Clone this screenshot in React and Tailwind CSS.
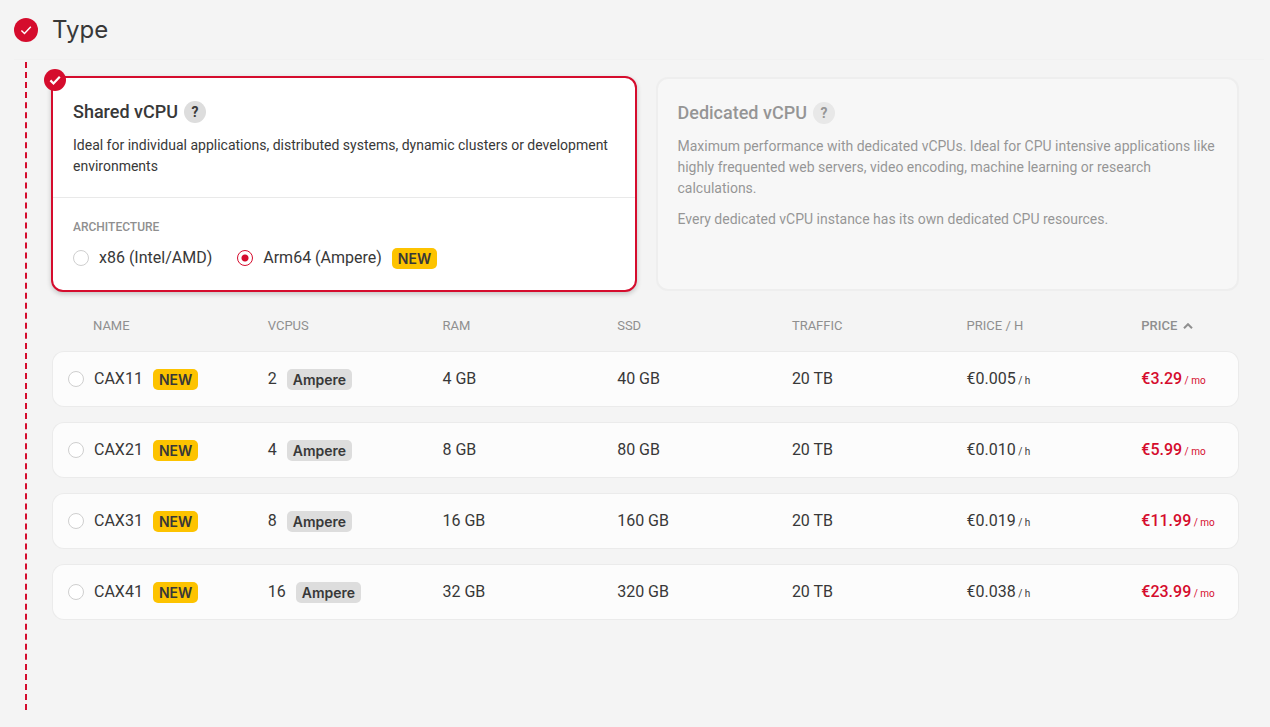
import { useState } from 'react';

const COLUMNS = ['Name', 'vCPUs', 'RAM', 'SSD', 'Traffic', 'Price / h'];

const SERVERS = [
    { name: 'CAX11', cpus: 2, ram: '4 GB', ssd: '40 GB', traffic: '20 TB', hourly: '€0.005', monthly: '€3.29' },
    { name: 'CAX21', cpus: 4, ram: '8 GB', ssd: '80 GB', traffic: '20 TB', hourly: '€0.010', monthly: '€5.99' },
    { name: 'CAX31', cpus: 8, ram: '16 GB', ssd: '160 GB', traffic: '20 TB', hourly: '€0.019', monthly: '€11.99' },
    { name: 'CAX41', cpus: 16, ram: '32 GB', ssd: '320 GB', traffic: '20 TB', hourly: '€0.038', monthly: '€23.99' },
];

const ARCHITECTURES = [
    { id: 'x86', label: 'x86 (Intel/AMD)' },
    { id: 'arm64', label: 'Arm64 (Ampere)', isNew: true },
];

const Check = ({ strokeWidth }) => (
    <svg viewBox="0 0 12 12" className="size-3" fill="none" stroke="currentColor" strokeWidth={strokeWidth} aria-hidden="true">
        <path d="M1.4 6.4 L4.5 9.5 L10.8 2.8" />
    </svg>
);

const Badge = ({ children, className }) => (
    <span className={`inline-block h-[21px] rounded-[5px] px-1.5 font-['Inter',sans-serif] text-sm leading-[21px] font-semibold text-[#383838] ${className}`}>
        {children}
    </span>
);

const Radio = (props) => (
    <input
        type="radio"
        className="m-0 block size-4 shrink-0 appearance-none rounded-full border border-[#cfcfcf] bg-white checked:border-[#d50c2d] checked:bg-[radial-gradient(circle,#d50c2d_3px,#fff_4px)]"
        {...props}
    />
);

const Help = ({ label }) => (
    <button type="button" aria-label={label} className="size-[22px] rounded-full bg-[#dddddd] text-center text-sm leading-[22px] font-bold text-[#383838]">
        ?
    </button>
);

const SharedCard = ({ arch, setArch }) => (
    <section className="relative -m-px rounded-xl border-2 border-[#d50c2d] bg-white shadow-[0_2px_5px_rgba(0,0,0,0.2)]">
        <span className="absolute -top-[9px] -left-[9px] flex size-[22px] items-center justify-center rounded-full bg-[#d50c2d] text-white">
            <Check strokeWidth={2.2} />
        </span>
        <div className="px-5 pt-[23px] pb-5">
            <div className="flex items-center gap-1.5">
                <h2 className="text-lg leading-[22px] font-medium">Shared vCPU</h2>
                <Help label="About shared vCPU" />
            </div>
            <p className="mt-3 text-sm leading-[21px]">
                Ideal for individual applications, distributed systems, dynamic clusters or development environments
            </p>
        </div>
        <div role="radiogroup" aria-labelledby="arch-title" className="border-t border-[#e9e9e9] px-5 pt-[21px] pb-5">
            <h3 id="arch-title" className="text-xs leading-4 font-medium text-[#8f8f8f] uppercase">Architecture</h3>
            <div className="mt-[11px] flex gap-[25px]">
                {ARCHITECTURES.map((item) => (
                    <label key={item.id} className="flex h-6 items-center gap-2.5 text-base">
                        <Radio name="arch" checked={arch === item.id} onChange={() => setArch(item.id)} />
                        {item.label}
                        {item.isNew && <Badge className="bg-[#fdc300]">NEW</Badge>}
                    </label>
                ))}
            </div>
        </div>
    </section>
);

const DedicatedCard = () => (
    <section className="rounded-xl border-2 border-[#e9e9e9] bg-[#fbfbfb] px-5 pt-[23px] pb-5 opacity-50">
        <div className="flex items-center gap-1.5">
            <h2 className="text-lg leading-[22px] font-medium">Dedicated vCPU</h2>
            <Help label="About dedicated vCPU" />
        </div>
        <p className="mt-3 text-sm leading-[21px]">
            Maximum performance with dedicated vCPUs. Ideal for CPU intensive applications like highly frequented web servers, video encoding, machine learning or research calculations.
        </p>
        <p className="mt-2.5 text-sm leading-[21px]">
            Every dedicated vCPU instance has its own dedicated CPU resources.
        </p>
    </section>
);

const ServerRow = ({ server, selected, onSelect }) => {
    const cell = 'h-14 border-y border-[#ebebeb] bg-[#fcfcfc] p-0';

    return (
        <tr>
            <td className={`${cell} rounded-l-xl border-l pl-[15px]`}>
                <Radio id={server.name} name="server" checked={selected} onChange={onSelect} />
            </td>
            <td className={cell}>
                <label htmlFor={server.name} className="flex items-center gap-2.5 pl-px">
                    {server.name}
                    <Badge className="bg-[#fdc300]">NEW</Badge>
                </label>
            </td>
            <td className={cell}>
                <div className="flex items-center gap-2.5">
                    {server.cpus}
                    <Badge className="bg-[#dddddd]">Ampere</Badge>
                </div>
            </td>
            <td className={cell}>{server.ram}</td>
            <td className={cell}>{server.ssd}</td>
            <td className={cell}>{server.traffic}</td>
            <td className={cell}>
                {server.hourly}<span className="text-[10px]"> / h</span>
            </td>
            <td className={`${cell} rounded-r-xl border-r font-medium text-[#d50c2d]`}>
                {server.monthly}<span className="text-[10px] font-normal"> / mo</span>
            </td>
        </tr>
    );
};

const App = () => {
    const [arch, setArch] = useState('arm64');
    const [selected, setSelected] = useState(null);

    return (
        <main className="min-h-screen bg-[#f4f4f4] font-['Roboto',sans-serif] text-base text-[#383838]">
            <header className="mr-1.5 ml-3.5 flex items-center gap-3.5 border-b border-[#f1f1f1] pt-[17px] pb-4">
                <span className="flex size-6 items-center justify-center rounded-full bg-[#d50c2d] text-white">
                    <Check strokeWidth={1.4} />
                </span>
                <h1 className="font-['Inter',sans-serif] text-2xl leading-[26px]">Type</h1>
            </header>

            <div className="mt-0.5 ml-[25px] border-l-2 border-dashed border-[#d50c2d] pt-[15px] pr-[31px] pb-[75px] pl-[25px]">
                <div className="grid grid-cols-2 gap-5">
                    <SharedCard arch={arch} setArch={setArch} />
                    <DedicatedCard />
                </div>

                <table className="mt-2.5 w-full table-fixed border-separate border-spacing-x-0 border-spacing-y-[15px] text-left">
                    <colgroup>
                        <col className="w-[41px]" />
                        {COLUMNS.map((column) => <col key={column} className="w-[14.72%]" />)}
                        <col />
                    </colgroup>
                    <thead className="text-[13px] leading-5 text-[#8f8f8f] uppercase">
                        <tr>
                            <td className="p-0"></td>
                            {COLUMNS.map((column) => (
                                <th key={column} scope="col" className="p-0 font-normal">{column}</th>
                            ))}
                            <th scope="col" className="p-0 font-medium" aria-sort="ascending">
                                <button type="button" className="flex items-center gap-1.5 uppercase">
                                    Price
                                    <svg viewBox="0 0 10 6" className="h-1.5 w-2.5" fill="none" stroke="currentColor" strokeWidth="2" aria-hidden="true">
                                        <path d="M1 5.2 L5 1.2 L9 5.2" />
                                    </svg>
                                </button>
                            </th>
                        </tr>
                    </thead>
                    <tbody>
                        {SERVERS.map((server) => (
                            <ServerRow
                                key={server.name}
                                server={server}
                                selected={selected === server.name}
                                onSelect={() => setSelected(server.name)}
                            />
                        ))}
                    </tbody>
                </table>
            </div>
        </main>
    );
};

export default App;
